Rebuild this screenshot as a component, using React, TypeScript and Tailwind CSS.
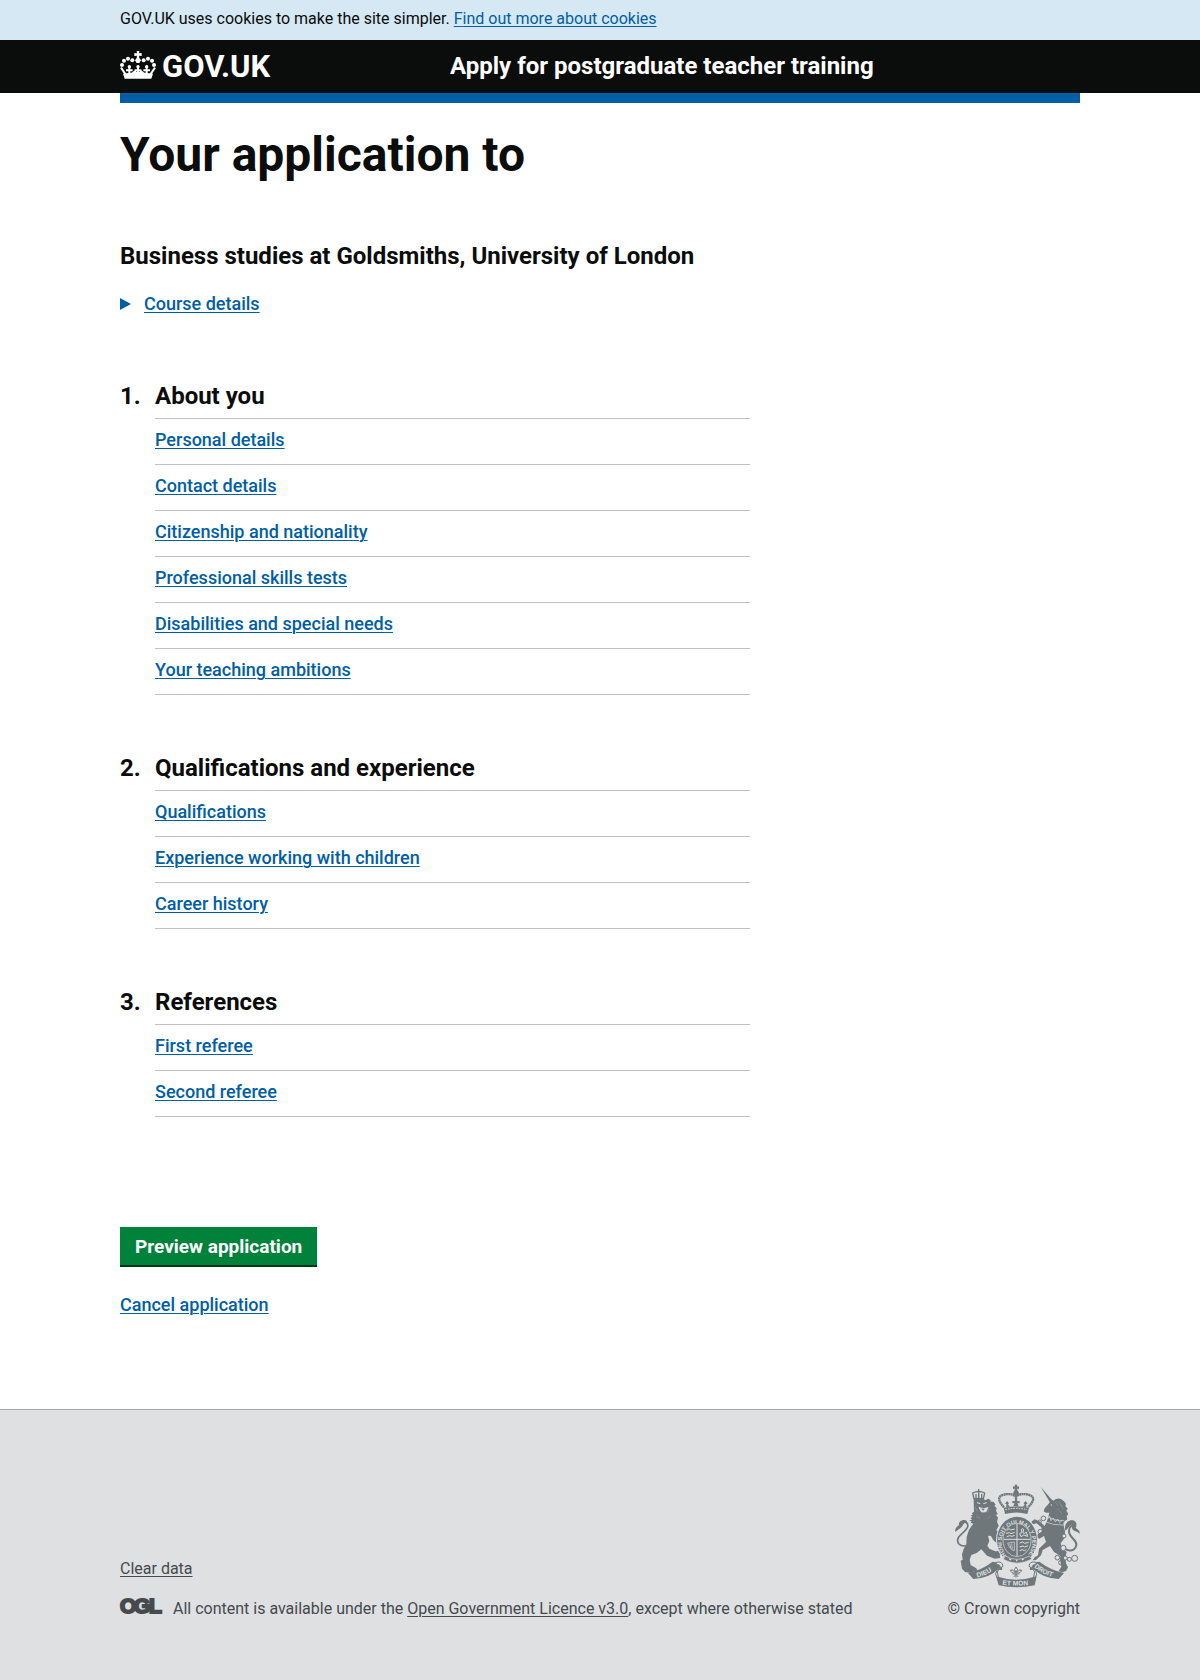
import React from "react";

const groups = [
  {
    title: "About you",
    items: [
      "Personal details",
      "Contact details",
      "Citizenship and nationality",
      "Professional skills tests",
      "Disabilities and special needs",
      "Your teaching ambitions",
    ],
  },
  {
    title: "Qualifications and experience",
    items: ["Qualifications", "Experience working with children", "Career history"],
  },
  { title: "References", items: ["First referee", "Second referee"] },
];

const link = "text-[#005ea5] underline underline-offset-2 decoration-1";

function Crown() {
  return (
    <svg viewBox="12 9 108 84" className="h-7 w-9 shrink-0" fill="#fff" aria-hidden="true">
      <circle cx="18" cy="51" r="6" />
      <circle cx="24" cy="38" r="6" />
      <circle cx="36" cy="32" r="6" />
      <circle cx="49" cy="37" r="6" />
      <circle cx="83" cy="37" r="6" />
      <circle cx="96" cy="32" r="6" />
      <circle cx="108" cy="38" r="6" />
      <circle cx="114" cy="51" r="6" />
      <path d="M62 9h8l-1 7 8-1v9l-8-1 1 7 5 7-5 8h-8l-5-8 5-7 1-7-8 1v-9l8 1z" />
      <path d="M15 59l15 22M117 59l-15 22M40 56v24M66 56v24M92 56v24M30 67h20M56 67h20M82 67h20M47 79l9-8 10 8 10-8 9 8" fill="none" stroke="#fff" strokeWidth="6" />
      <circle cx="40" cy="56" r="5" />
      <circle cx="66" cy="56" r="5" />
      <circle cx="92" cy="56" r="5" />
      <path d="M21 77q45-7 90 0l-5 15H26z" />
    </svg>
  );
}

function OglLogo() {
  return (
    <svg
      viewBox="0 0 41 28"
      className="-my-1 h-7 w-[41px] shrink-0 overflow-visible font-['Liberation_Sans',sans-serif] text-[21px] font-bold"
      fill="#454a4d"
      stroke="#454a4d"
      strokeWidth="2"
      role="img"
      aria-label="OGL"
    >
      <text x="0" y="18">O</text>
      <text x="14" y="18">G</text>
      <text x="29" y="18">L</text>
    </svg>
  );
}

function Crest() {
  const c = "#6f777b";
  const bg = "#dee0e2";
  return (
    <svg viewBox="45 42 375 312" className="h-[104px] w-[125px]" fill={c} aria-hidden="true">
      {/* lion: tail, crown, body */}
      <path d="M90 222c-10 8-26 8-33 0-9-11-2-22 9-31 13-11 24-24 13-34-5-4-13-1-17 4" fill="none" stroke={c} strokeWidth="5" />
      <path d="M45 186c0-11 5-16 12-20-2-10 6-16 16-16 7 0 10 5 8 11-5-4-9-2-11 2-4 10-13 14-25 23z" />
      <path d="M98 69q18-9 36 0l-4 18q-14-4-28 0z" fill="none" stroke={c} strokeWidth="4" />
      <path d="M116 57v28M108 72v12M125 72v12" stroke={c} strokeWidth="4" />
      <path d="M101 91l4-6q12-3 24 0l6 6 10-5 8 5-4 3 12 2 6 8-4 3 7 8-2 7 5 10-5 3 6 8-3 12 5 12-7 14 13 8 8 14-10 8-3 14-17-14-7-13-9-1 4 16-6 14 6 9 18 8 9-1 9 11-5 2 2 8-17 2-23-9-17-19-14 11-16 6-5 14 3 16 17 10 5 12-12-3-8 5-19-3-9-10-4-24 6-3-2-16 5-16 8-14 1-22 7-22 13-18-8-3 3-4-8-1 10-5-6-3 7-5-6-2 7-5-4-3 7-5z" />
      <path d="M111 98l10 3M130 101l10-3M117 113l14 3 12-3-5 12-13 1z" stroke={bg} strokeWidth="3" fill={bg} />
      <path d="M115 100l8 3M131 103l8-3M123 116h11l-4 6z" />
      <path d="M105 110l7 15M108 138l12 7M148 110l-5 18M153 138l-10 8" stroke={bg} strokeWidth="1" fill="none" opacity=".6" />
      {/* unicorn: horn, head, body, tail */}
      <path d="M302 50l37 44-8 5z" />
      <path d="M330 96L331 86 340 92Q352 82 364 88L372 94 378 102 376 108 383 116 379 122 385 132 380 138 382 148 374 154 370 160 372 172Q378 188 372 206L362 220 366 234 380 246 376 262 378 280 384 292 378 303 366 307 356 303 364 290 360 268 361 258 342 246 330 228 308 240 303 256 288 270 278 271 284 262 294 256 297 236 318 216 312 198 298 206 284 200 282 192 292 194 306 184 304 172 290 160 278 163 274 155 284 148 298 154 314 168 322 150 328 128 318 128 311 124 314 115 322 106z" />
      <path d="M321 138q20 15 52 14M318 156q20 10 52 9" stroke={bg} strokeWidth="2" fill="none" />
      <path d="M319 132l4 14 6-7 4 13 7-8 6 12 7-9 6 11 8-8" stroke={bg} strokeWidth="2" fill="none" />
      <path d="M346 96l8 12M356 94l8 15M364 104l6 14M352 116l14 16" stroke={bg} strokeWidth="1" opacity=".6" />
      <circle cx="334" cy="105" r="2" fill={bg} />
      <path d="M373 235c14 12 34 6 36-10 2-15-18-21-21-35-3-13 3-24 15-27" fill="none" stroke={c} strokeWidth="6" />
      <path d="M376 182c-5-20 9-34 23-31 12 4 12 14 8 23 7 3 12 9 13 17-8-7-19-7-23-14-3-5-2-11 1-16-11 5-12 15-22 21z" />
      <g fill="none" stroke={c} strokeWidth="3">
        <circle cx="310" cy="145" r="7" />
        <circle cx="299" cy="155" r="5" />
        <circle cx="301" cy="185" r="7" />
        <circle cx="372" cy="198" r="6" fill={bg} />
        <circle cx="370" cy="234" r="8" fill={bg} />
        <circle cx="352" cy="263" r="7" />
        <circle cx="363" cy="278" r="7" />
        <circle cx="376" cy="264" r="6" fill={bg} />
        <circle cx="388" cy="268" r="6" />
        <circle cx="404" cy="265" r="9" />
      </g>
      {/* garter and shield */}
      <ellipse cx="231" cy="210" rx="63" ry="73" fill={bg} />
      <ellipse cx="231" cy="210" rx="60" ry="70" />
      <defs>
        <path id="garter" d="M199 256A46 55 0 1 1 263 256" />
      </defs>
      <text fill={bg} className="font-['Liberation_Sans',sans-serif] text-[17px] font-bold">
        <textPath href="#garter">HONI SOIT QUI MAL Y PENSE</textPath>
      </text>
      <ellipse cx="231" cy="210" rx="42" ry="50" stroke={bg} strokeWidth="2" />
      <path d="M231 162v96M191 208h80" stroke={bg} strokeWidth="3" />
      <path d="M200 181l7-5 5 4 12-3M198 190l10-2 5 3 11-4M200 200l9-3 6 2 9-3M244 178q9-5 6 6t9 3l4 12-12-4-8 5-4-9 7-4zM239 219l9-3 6 4 12-3M239 231l10-3 5 3 10-4M239 242l8-3 6 3 6-3" stroke={bg} strokeWidth="3" fill="none" />
      <path d="M203 219l20-3v26q-14-3-20-23zM209 221l4 14M215 220l2 18" stroke={bg} strokeWidth="2" fill="none" />
      <path d="M196 258q34 20 72 0l8 9q-44 24-86 1z" stroke={bg} strokeWidth="2" />
      <path d="M208 266l5 4M230 269v5M251 266l-5 4" stroke={bg} strokeWidth="4" />
      {/* royal crown */}
      <path d="M191 113l4 19q36-9 67 0l5-19q-36-9-76 0z" />
      <path d="M196 119q33-8 65 0" stroke={bg} strokeWidth="3" strokeDasharray="5 3" fill="none" />
      <path d="M192 112q-25-27-7-36 25-9 42 3 20-12 44-3 20 9-7 36" fill="none" stroke={c} strokeWidth="7" strokeDasharray="6 1" />
      <path d="M228 70v32" stroke={c} strokeWidth="7" strokeDasharray="5 1" />
      <path d="M224 44h8l-1 6 6-1v8l-6-1 2 6q8 8 0 14h-10q-7-6 0-14l2-6-6 1v-8l6 1z" />
      <path d="M220 108l4-9-7 1v-7l7 1 4-8 4 8 7-1v7l-7-1 4 9zM198 111l2-8-5-2 6-8 6 7-3 4 6 6zM260 111l-2-8 5-2-6-8-6 7 3 4-6 6z" />
      {/* thistle and rose stem */}
      <path d="M228 323v-22M228 291l5 8-5 9-5-9zM225 308q-12 4-13-8 8-2 12 6M231 308q12 4 13-8-8-2-12 6M218 312h20M221 321l7-8 7 8" stroke={c} strokeWidth="3" fill="none" />
      {/* motto ribbon */}
      <path d="M84 309Q125 300 158 275L176 278Q189 288 186 300L172 299Q150 323 100 327z" />
      <path d="M372 309Q331 300 298 275L280 278Q267 288 270 300L284 299Q306 323 356 327z" />
      <path d="M169 277q18-5 20 12-14 6-17 17l4 19q-8-3-9-13 0-12 14-20-2-10-12-8zM288 277q-20-5-21 12 14 6 17 17l-4 19q9-3 10-13 0-12-14-20 2-10 12-8z" fill={bg} stroke={c} strokeWidth="3" />
      <path d="M168 319q60 20 122 0l-6 27q-54 12-108 0z" />
      <g fill={bg} className="font-['Liberation_Sans',sans-serif] text-[20px] font-bold">
        <defs>
          <path id="motto-left" d="M112 322Q146 314 176 288" />
          <path id="motto-mid" d="M187 344Q230 350 284 343" />
          <path id="motto-right" d="M282 291Q308 316 358 326" />
        </defs>
        <text><textPath href="#motto-left">DIEU</textPath></text>
        <text><textPath href="#motto-mid">ET MON</textPath></text>
        <text><textPath href="#motto-right">DROIT</textPath></text>
      </g>
    </svg>
  );
}

export default function App() {
  return (
    <div className="flex min-h-screen flex-col bg-white font-['Roboto','Liberation_Sans',sans-serif] text-lg leading-[25px] text-[#0b0c0c]">
      <div className="bg-[#d5e8f3] px-4 pt-[9px] pb-[11px] text-base leading-5">
        <p className="mx-auto max-w-[960px]">
          GOV.UK uses cookies to make the site simpler.{" "}
          <a href="#" className={link}>Find out more about cookies</a>
        </p>
      </div>
      <header className="bg-[#0b0c0c] px-4 text-white">
        <div className="mx-auto flex max-w-[960px] flex-wrap items-center py-[11px] font-bold">
          <a href="#" className="flex w-[330px] items-start gap-[6px] text-[31px] leading-[31px]">
            <Crown />
            GOV.UK
          </a>
          <a href="#" className="text-2xl leading-[31px]">Apply for postgraduate teacher training</a>
        </div>
      </header>
      <main className="grow px-4">
        <div className="mx-auto max-w-[960px] border-t-[10px] border-[#005ea5] pt-[27px] pb-[92px]">
          <h1 className="text-5xl leading-[50px] font-bold">Your application to</h1>
          <h2 className="mt-[61px] text-2xl leading-[30px] font-bold">
            Business studies at Goldsmiths, University of London
          </h2>
          <details className="mt-5 mb-[65px] font-medium">
            <summary className="flex w-fit cursor-pointer list-none items-center text-[#005ea5]">
              <svg viewBox="0 0 11 12" className="mr-[13px] h-3 w-[11px]" fill="#005ea5" aria-hidden="true">
                <path d="M0 0l11 6-11 6z" />
              </svg>
              <span className={link}>Course details</span>
            </summary>
          </details>
          <ol className="flex flex-col gap-[58px] md:w-2/3 md:pr-[10px]">
            {groups.map((group, index) => (
              <li key={group.title}>
                <h2 className="flex pb-[7px] text-2xl leading-[30px] font-bold">
                  <span className="w-[35px] shrink-0">{index + 1}.</span>
                  {group.title}
                </h2>
                <ul className="ml-[35px] border-t border-[#bfc1c3] font-medium">
                  {group.items.map((item) => (
                    <li key={item} className="border-b border-[#bfc1c3] pt-2 pb-3">
                      <a href="#" className={link}>{item}</a>
                    </li>
                  ))}
                </ul>
              </li>
            ))}
          </ol>
          <button
            type="button"
            className="mt-[110px] block cursor-pointer border-b-2 border-[#003618] bg-[#00823b] px-[15px] pt-[7px] pb-[6px] text-[19px] leading-[25px] font-bold text-white"
          >
            Preview application
          </button>
          <p className="mt-[25px] font-medium">
            <a href="#" className={link}>Cancel application</a>
          </p>
        </div>
      </main>
      <footer className="border-t border-[#a1acb2] bg-[#dee0e2] px-4 pt-[74px] pb-[61px] text-base leading-5 text-[#454a4d]">
        <div className="mx-auto flex max-w-[960px] flex-wrap items-end justify-between gap-4">
          <div className="flex flex-col gap-5">
            <p>
              <a href="#" className="underline underline-offset-2">Clear data</a>
            </p>
            <div className="flex items-center gap-3">
              <OglLogo />
              <p>
                All content is available under the{" "}
                <a href="#" className="underline underline-offset-2">Open Government Licence v3.0</a>, except where
                otherwise stated
              </p>
            </div>
          </div>
          <a href="#" className="flex flex-col items-end gap-[11px]">
            <Crest />
            © Crown copyright
          </a>
        </div>
      </footer>
    </div>
  );
}
